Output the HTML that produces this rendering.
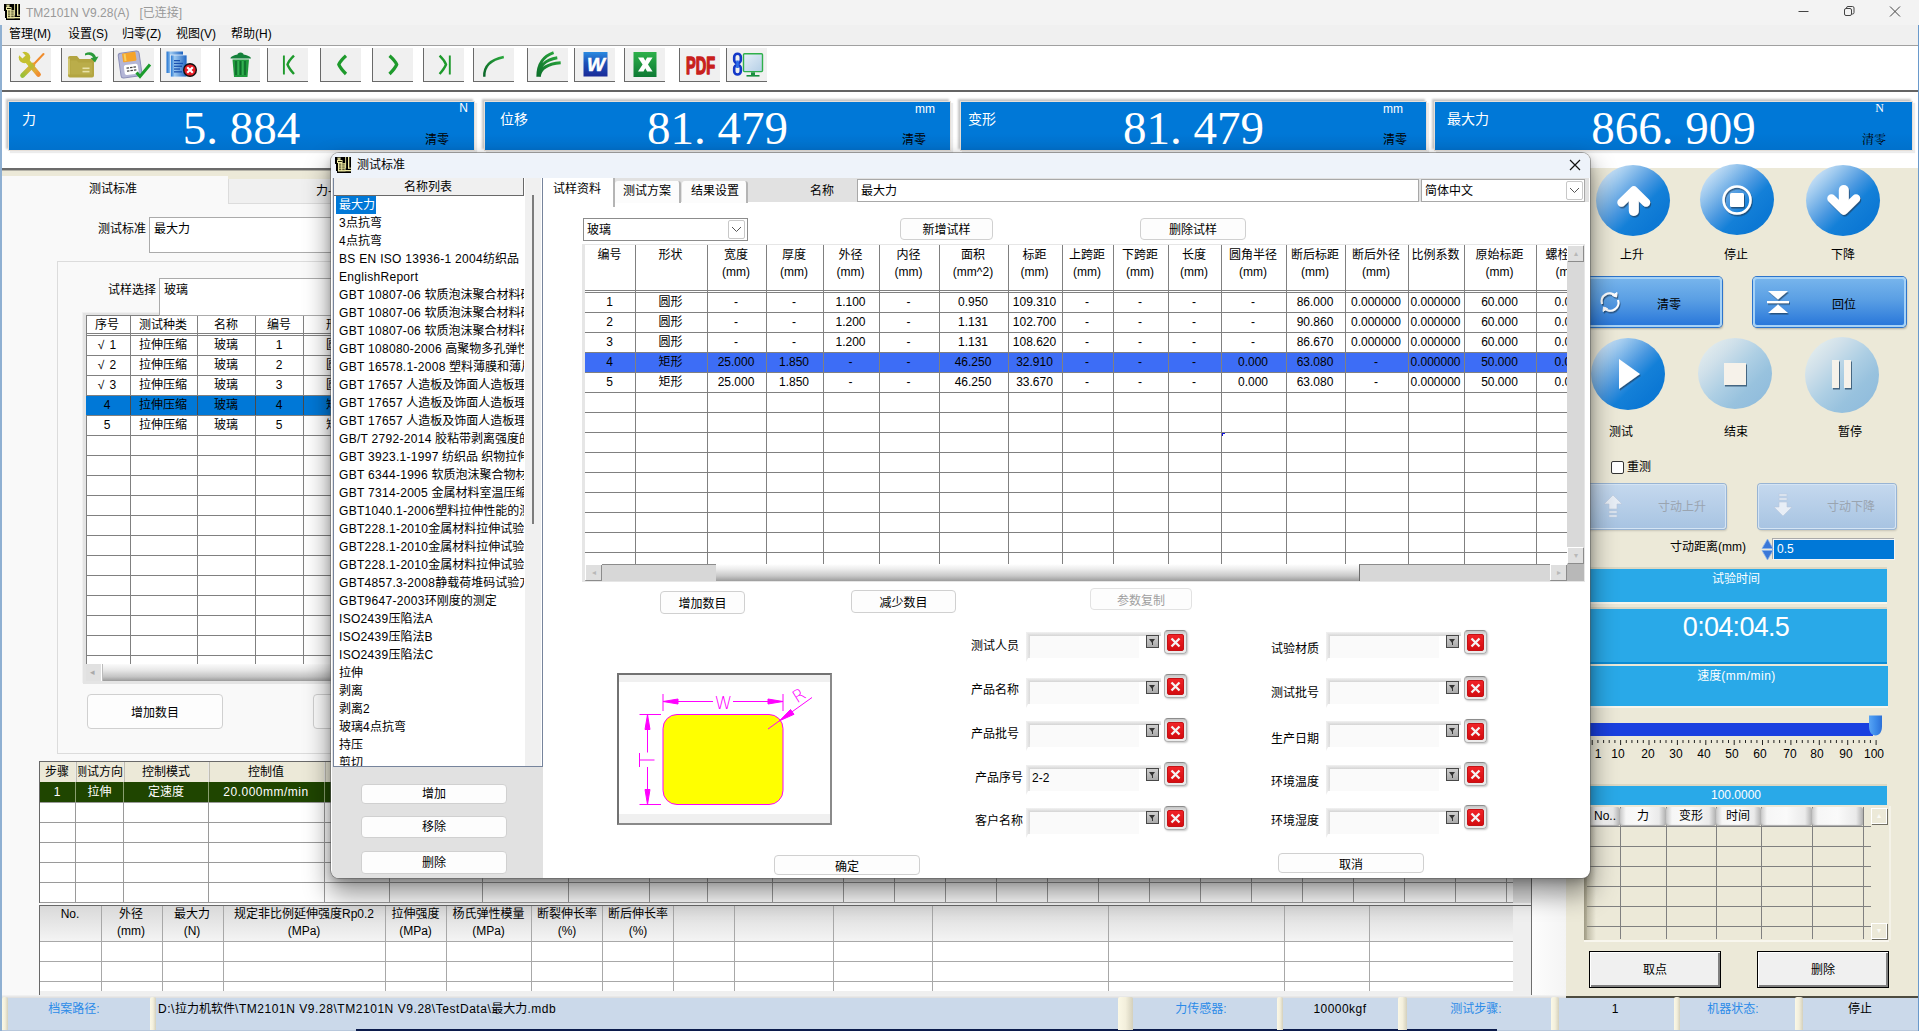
<!DOCTYPE html><html lang="zh-CN"><head><meta charset="utf-8"><title>TM2101N V9.28(A)</title><style>
*{box-sizing:border-box;margin:0;padding:0}
html,body{width:1919px;height:1031px;overflow:hidden;background:#fff}
body{position:relative;font:12px/16px "Liberation Sans","Noto Sans CJK SC",sans-serif;color:#000}
.a{position:absolute}
.c{text-align:center}
.t{position:absolute;white-space:nowrap;line-height:16px}
.tb{position:absolute;top:48px;width:41px;height:34px;background:#f0f0f0;border-left:1px solid #696969;border-bottom:1px solid #696969}
.tb svg{position:absolute;left:0;top:0}
.disp{position:absolute;top:102px;height:48px;background:linear-gradient(180deg,#0078d7 65%,#0071cc);box-shadow:0 0 0 1px #e6dfd8,-2px -2px 2px 1px #c6c6c6,2px 2px 1px 1px #ececec}
.disp .num{position:absolute;left:0;right:0;top:-2px;text-align:center;color:#fff;font:47px/56px "Liberation Serif","Noto Serif CJK SC",serif;white-space:nowrap}
.disp .num i{display:inline-block;width:.5em;font-style:normal;text-align:left}
.disp .lb{position:absolute;left:13px;top:8px;color:#fff;font-size:14px;line-height:18px}
.disp .un{position:absolute;top:-1px;color:#fff;font-size:12px}
.disp .cl{position:absolute;top:30px;color:#000;font-size:12px}
.btn{position:absolute;background:#fdfdfd;border:1px solid #d0d0d0;border-radius:4px;text-align:center;white-space:nowrap;padding-top:1.500px}
.g{position:absolute;overflow:hidden}
.g .h,.g .v{position:absolute;background:#808080}
.cell{position:absolute;text-align:center;white-space:nowrap;line-height:16px;overflow:hidden}
.li{position:absolute;left:339px;white-space:nowrap;height:18px;line-height:18px}
.inp{position:absolute;height:26px;background:#fafafa;border-top:4px solid #dadada;border-left:4px solid #e2e2e2}
.inp:before{content:"";position:absolute;left:-4px;top:-4px;right:-22px;height:4px;background:linear-gradient(180deg,#f2f2f2,#d4d4d4)}
.inp:after{content:"";position:absolute;left:-4px;top:-4px;width:4px;height:30px;background:linear-gradient(90deg,#f2f2f2,#d8d8d8);clip-path:polygon(0 0,100% 4px,100% 22px,0 100%)}
.dd{position:absolute;width:13px;height:13px;background:linear-gradient(180deg,#cfcfcf,#aaa);border:1px solid #484848}
.dd:after{content:"";position:absolute;left:2px;top:3px;border:3.500px solid transparent;border-top:4px solid #333;border-bottom:0}
.dd:before{content:"";position:absolute;left:5px;top:5px;width:1px;height:4px;background:#333}
.rx{position:absolute;width:23px;height:24px;border-radius:4px;background:linear-gradient(180deg,#c4c4c4,#e8e8e8 22%,#ececec);border:1px solid #b0b0b0;border-top-color:#8c8c8c;box-shadow:1px 1px 2px #c8c8c8}
.rx b{position:absolute;left:2px;top:3px;width:17px;height:17px;border-radius:2px;background:linear-gradient(180deg,#f02428,#d40c10);border:1px solid #c41216}
.circ{position:absolute;width:74px;height:74px;border-radius:50%}
.pb{position:absolute;background:#29a9e8;color:#fff;text-align:center}
.sep{position:absolute;top:997px;width:8px;height:33px;background:linear-gradient(90deg,#fbf8e6 0%,#f3efdc 50%,#d4d0bc 100%);border-radius:2px 2px 0 0}
</style></head><body>
<div class="a" style="left:0px;top:0px;width:1919px;height:25px;background:#f3f3f3"></div>
<svg class="a" style="left:4px;top:4px" width="16" height="16" viewBox="0 0 16 16"><path d="M0 0H16V16H2V14H1V7H0Z" fill="#000"/><g fill="#f1eda6"><rect x="2.500" y="0.500" width="3" height="2.300"/><rect x="2" y="3" width="5.500" height="3" /><rect x="3" y="6" width="7.500" height="8.300"/><rect x="10.200" y="0" width="0.900" height="11.500"/><rect x="13" y="0" width="1.300" height="11.500"/><rect x="13" y="10.700" width="3" height="1"/><rect x="3" y="13" width="13" height="1.300"/></g><g fill="#1a1800"><rect x="3.500" y="0.300" width="1" height="1"/><rect x="3" y="4" width="3.800" height="1"/><rect x="4" y="6.700" width="2.300" height=".8"/><rect x="7.200" y="6.700" width="2.500" height=".8"/><rect x="4" y="8.600" width="2.300" height=".8"/><rect x="7.200" y="8.600" width="2.500" height=".8"/><rect x="4" y="10.500" width="2.300" height=".8"/><rect x="7.200" y="10.500" width="2.500" height=".8"/><rect x="4" y="12.300" width="2.300" height=".8"/><rect x="7.200" y="12.300" width="2.500" height=".8"/></g></svg>
<div class="t " style="left:26px;top:5px;color:#999">TM2101N V9.28(A)&nbsp;&nbsp;&nbsp;[已连接]</div>
<svg class="a" style="left:1790px;top:0" width="129" height="25" viewBox="0 0 129 25" fill="none" stroke="#444" stroke-width="1"><path d="M8.5 11.5h10"/><rect x="54.5" y="8.5" width="7" height="7" rx="1.5"/><path d="M56.5 8.5v-0.5a1.5 1.5 0 0 1 1.5-1.5h4.5a1.5 1.5 0 0 1 1.5 1.5v4.500a1.5 1.5 0 0 1-1.5 1.5h-0.5"/><path d="M100 6.500l10 10M110 6.500l-10 10"/></svg>
<div class="a" style="left:0px;top:25px;width:1919px;height:20px;background:#f0f0f0"></div>
<div class="t " style="left:9px;top:26px;">管理(M)</div>
<div class="t " style="left:68px;top:26px;">设置(S)</div>
<div class="t " style="left:122px;top:26px;">归零(Z)</div>
<div class="t " style="left:176px;top:26px;">视图(V)</div>
<div class="t " style="left:231px;top:26px;">帮助(H)</div>
<div class="a" style="left:0px;top:45px;width:1919px;height:1px;background:#a0a0a0"></div>
<div class="a" style="left:0px;top:46px;width:1919px;height:45px;background:#fff"></div>
<div class="a" style="left:0px;top:90px;width:1919px;height:2px;background:#646464"></div>
<div class="tb" style="left:10px"><svg width="41" height="34" viewBox="0 0 41 34"><defs><linearGradient id="tg" x1="0" y1="0" x2="1" y2="1"><stop offset="0" stop-color="#d8c828"/><stop offset=".45" stop-color="#b4bc34"/><stop offset=".75" stop-color="#e8a838"/><stop offset="1" stop-color="#f08c30"/></linearGradient><linearGradient id="tg2" x1="1" y1="0" x2="0" y2="1"><stop offset="0" stop-color="#e8a030"/><stop offset=".5" stop-color="#c8b838"/><stop offset="1" stop-color="#98c038"/></linearGradient></defs>
<path d="M32.500 6L23.500 15.500" stroke="#f08c2c" stroke-width="2" stroke-linecap="round"/><path d="M22 17L11.500 27.500" stroke="url(#tg2)" stroke-width="4.600" stroke-linecap="round"/>
<path d="M15 11.500L27.500 26.500" stroke="url(#tg)" stroke-width="4.800" stroke-linecap="round"/><circle cx="13.500" cy="9.500" r="5.800" fill="#c4c030"/><rect x="-2.200" y="-9" width="4.400" height="9" transform="translate(13 9) rotate(-45)" fill="#f0f0f0"/></svg></div>
<div class="tb" style="left:61px"><svg width="41" height="34" viewBox="0 0 41 34"><path d="M6 10a2 2 0 0 1 2-2h7l2.500 3h12.500a2 2 0 0 1 2 2v14.500a2 2 0 0 1-2 2h-22a2 2 0 0 1-2-2z" fill="#b3a541"/><path d="M8.500 12.500h6l2 2h13.500v12h-21.500z" fill="#baad4a"/><path d="M7 10.500v16" stroke="#d9cf7d" stroke-width="1.500"/><rect x="20.500" y="19.500" width="7" height="1.600" fill="#e8e2a8"/><rect x="20.500" y="22.800" width="7" height="1.600" fill="#e8e2a8"/><path d="M23 5.500c4-2.500 9.500-1.500 11 3.500l2.500-0.500l-3.500 6l-4.500-4.500l2.500-0.300c-1.500-3-5-3.500-8-2.200z" fill="#2a9a3a"/></svg></div>
<div class="tb" style="left:113px"><svg width="41" height="34" viewBox="0 0 41 34"><g transform="rotate(-8 16 16)"><rect x="5.500" y="4" width="21" height="25" rx="2.500" fill="#b4b6d6" stroke="#8d90b8" stroke-width="1"/><rect x="9.500" y="4.500" width="13.500" height="9" rx="1" fill="#f5a32a"/><rect x="11" y="5.500" width="2" height="7" fill="#f7d060"/><rect x="9.500" y="16.500" width="14" height="10" rx="2" fill="#fff"/><g fill="#444"><rect x="12" y="19" width="2.500" height="1.300"/><rect x="15.500" y="19" width="2.500" height="1.300"/><rect x="19" y="19" width="2.500" height="1.300"/><rect x="12" y="22" width="2.500" height="1.300"/><rect x="15.500" y="22" width="2.500" height="1.300"/><rect x="19" y="22" width="2.500" height="1.300"/></g></g><path d="M22.500 24.500l3.500 4l10-12" stroke="#1c9c2c" stroke-width="3" fill="none"/></svg></div>
<div class="tb" style="left:160px"><svg width="41" height="34" viewBox="0 0 41 34"><defs><linearGradient id="dg" x1="0" y1="0" x2="1" y2="0"><stop offset="0" stop-color="#1a6fd0"/><stop offset=".25" stop-color="#9cc8f0"/><stop offset="1" stop-color="#1c62c0"/></linearGradient></defs><rect x="5.500" y="3.500" width="16.500" height="21.500" fill="url(#dg)"/><rect x="9.500" y="7" width="16.500" height="22" fill="url(#dg)" stroke="#e8f0fa" stroke-width=".8"/><g fill="#1a50b0"><rect x="13" y="12" width="6" height="1.300"/><rect x="13" y="14.800" width="9" height="1.300"/><rect x="13" y="17.600" width="8" height="1.300"/><rect x="13" y="20.400" width="6" height="1.300"/><rect x="13" y="23.200" width="8" height="1.300"/></g><circle cx="29" cy="22" r="6.300" fill="#e81c24" stroke="#111" stroke-width="1.400"/><path d="M26.200 19.200l5.600 5.600M31.800 19.200l-5.600 5.600" stroke="#fff" stroke-width="2.200"/></svg></div>
<div class="tb" style="left:219px"><svg width="41" height="34" viewBox="0 0 41 34"><path d="M10.500 10.500c0-2 4-3.500 7-4c0-1 1-2 3-2s3 1 3 2c3 0.500 7.500 2 7.500 4z" fill="#14803a"/><path d="M12.500 11.500h16.500l-1.500 17.500h-13.500z" fill="#1f9a3c"/><path d="M16 13v14M20.500 13v14M25 13v14" stroke="#0e6a2c" stroke-width="1.600"/><path d="M18.200 13v14M22.800 13v14" stroke="#3cb85a" stroke-width="1"/></svg></div>
<div class="tb" style="left:267px"><svg width="41" height="34" viewBox="0 0 41 34"><path d="M15.900 7.500v19" stroke="#1e9a2c" stroke-width="1.900" fill="none"/><path d="M26 7.700Q21 12.500 19.500 16.500Q21 20.500 26 26" stroke="#1e9a2c" stroke-width="2.400" fill="none"/></svg></div>
<div class="tb" style="left:320px"><svg width="41" height="34" viewBox="0 0 41 34"><path d="M25 7.700Q19.500 12.500 17.800 16.500Q19.500 20.500 25 26" stroke="#1e9a2c" stroke-width="3.200" fill="none"/></svg></div>
<div class="tb" style="left:372px"><svg width="41" height="34" viewBox="0 0 41 34"><path d="M16.500 7.700Q22 12.500 23.700 16.500Q22 20.500 16.500 26" stroke="#1e9a2c" stroke-width="3.200" fill="none"/></svg></div>
<div class="tb" style="left:423px"><svg width="41" height="34" viewBox="0 0 41 34"><path d="M15.600 7.700Q20.500 12.500 22 16.500Q20.500 20.500 15.600 26" stroke="#1e9a2c" stroke-width="2.400" fill="none"/><path d="M25.800 7.500v19" stroke="#1e9a2c" stroke-width="1.900" fill="none"/></svg></div>
<div class="tb" style="left:473px"><svg width="41" height="34" viewBox="0 0 41 34"><defs><linearGradient id="cg" x1="0" y1="1" x2="1" y2="0"><stop offset="0" stop-color="#0a6428"/><stop offset="1" stop-color="#2aa83c"/></linearGradient></defs><path d="M10.300 28.700c-0.500-10 6-17 19.500-19.700" stroke="url(#cg)" stroke-width="2.400" fill="none"/></svg></div>
<div class="tb" style="left:527px"><svg width="41" height="34" viewBox="0 0 41 34"><defs><linearGradient id="mg" x1="0" y1="1" x2="1" y2="0"><stop offset="0" stop-color="#0c6e2a"/><stop offset="1" stop-color="#2cac3e"/></linearGradient></defs><path d="M9.800 28.700c0-12 5.500-20.500 15.800-24M10.500 28.700c0-10 6.500-17 18.800-19M11.200 28.700c1-8 8-13 21.500-14" stroke="url(#mg)" stroke-width="2.900" fill="none"/></svg></div>
<div class="tb" style="left:574px"><svg width="41" height="34" viewBox="0 0 41 34"><defs><linearGradient id="wg" x1="0" y1="0" x2="0" y2="1"><stop offset="0" stop-color="#2a8ae0"/><stop offset=".45" stop-color="#1c50b8"/><stop offset="1" stop-color="#1a2a98"/></linearGradient></defs><rect x="8.500" y="4" width="24" height="24.500" fill="url(#wg)"/><text x="21" y="23" font-family="Liberation Sans,sans-serif" font-weight="bold" font-style="italic" font-size="19" fill="#fff" stroke="#fff" stroke-width=".5" text-anchor="middle">W</text></svg></div>
<div class="tb" style="left:624px"><svg width="41" height="34" viewBox="0 0 41 34"><defs><linearGradient id="xg" x1="0" y1="0" x2="0" y2="1"><stop offset="0" stop-color="#2db04a"/><stop offset="1" stop-color="#0e7a34"/></linearGradient></defs><rect x="8.500" y="4" width="23" height="25" fill="url(#xg)"/><path d="M13 9.500h5.500l1.800 3.300l1.800-3.300h5.500l-4.600 7l4.600 7h-5.500l-1.800-3.300l-1.800 3.300h-5.500l4.600-7z" fill="#fff"/></svg></div>
<div class="tb" style="left:679px"><svg width="41" height="34" viewBox="0 0 41 34"><text x="20.500" y="25.500" font-family="Liberation Sans,sans-serif" font-weight="bold" font-size="24" fill="#c8201c" stroke="#c8201c" stroke-width="1.500" stroke-linejoin="round" text-anchor="middle" textLength="29" lengthAdjust="spacingAndGlyphs">PDF</text></svg></div>
<div class="tb" style="left:726px"><svg width="41" height="34" viewBox="0 0 41 34"><defs><linearGradient id="sg" x1="0" y1="0" x2="1" y2="1"><stop offset="0" stop-color="#e6f0f8"/><stop offset="1" stop-color="#b4cee6"/></linearGradient></defs><rect x="16.500" y="5.800" width="19" height="17.800" rx="1" fill="url(#sg)" stroke="#2fb04a" stroke-width="1.400"/><rect x="24" y="24.300" width="4" height="3" fill="#1c9040"/><rect x="19.500" y="27" width="13" height="1.600" fill="#1c9040"/><g fill="none" stroke="#1438c8" stroke-width="2.600"><rect x="7.200" y="5.800" width="6.600" height="9.500" rx="3.300"/><rect x="7.200" y="17" width="6.600" height="9.500" rx="3.300"/><path d="M10.500 12.500v7.500" stroke="#2c6ce8"/></g></svg></div>
<div class="disp" style="left:9px;width:465px"><div class="lb" style="left:13px">力</div><div class="num">5<i>.</i>884</div><div class="un" style="right:6px;top:-2.500px;">N</div><div class="cl" style="right:25px;">清零</div></div>
<div class="disp" style="left:485px;width:465px"><div class="lb" style="left:15px">位移</div><div class="num">81<i>.</i>479</div><div class="un" style="right:15px;">mm</div><div class="cl" style="right:24px;">清零</div></div>
<div class="disp" style="left:961px;width:465px"><div class="lb" style="left:7px">变形</div><div class="num">81<i>.</i>479</div><div class="un" style="right:23px;">mm</div><div class="cl" style="right:19px;">清零</div></div>
<div class="disp" style="left:1435px;width:477px"><div class="lb" style="left:12px">最大力</div><div class="num">866<i>.</i>909</div><div class="un" style="right:28px;font-family:'Liberation Serif','Noto Serif CJK SC',serif;top:-2.500px;">N</div><div class="cl" style="right:26px;font-family:'Liberation Serif','Noto Serif CJK SC',serif;">清零</div></div>
<div class="a" style="left:0px;top:168px;width:1566px;height:2px;background:#6b6b6b"></div>
<div class="a" style="left:0px;top:170px;width:1566px;height:830px;background:#ece9d8;border-top:1px solid #b4b2a8"></div>
<div class="a" style="left:1566px;top:168px;width:1353px;height:830px;background:#ece9d8"></div>
<div class="a" style="left:2px;top:176px;width:226px;height:30px;background:#f9f9f9"></div>
<div class="a" style="left:2px;top:203px;width:1530px;height:794px;background:#f9f9f9;border-right:1px solid #707070"></div>
<div class="a" style="left:228px;top:179px;width:1303px;height:25px;background:#f0f0f0;border-bottom:1px solid #dcdcdc;border-left:1px solid #dcdcdc"></div>
<div class="a" style="left:1532px;top:179px;width:34px;height:818px;background:linear-gradient(90deg,#fdfdfd,#f4f4f4)"></div>
<div class="t c" style="left:-37px;width:300px;top:181px;">测试标准</div>
<div class="t " style="left:316px;top:183px;">力-</div>
<div class="t " style="left:98px;top:221px;">测试标准</div>
<div class="a" style="left:149px;top:217px;width:400px;height:36px;background:#fff;border:1px solid #ababab"></div>
<div class="t " style="left:154px;top:221px;">最大力</div>
<div class="a" style="left:57px;top:261px;width:1400px;height:493px;border:1px solid #dcdcdc"></div>
<div class="t " style="left:108px;top:282px;">试样选择</div>
<div class="a" style="left:83px;top:313px;width:470px;height:371px;background:#e4e4e4;box-shadow:-1px -1px 0 #f0f0f0"></div>
<div class="g" style="left:86px;top:315px;width:460px;height:349px;background:#fff;"><div class="h" style="left:0;top:0px;width:460px;height:1px;background:#808080"></div><div class="h" style="left:0;top:18px;width:460px;height:1px;background:#808080"></div><div class="h" style="left:0;top:20px;width:460px;height:1px;background:#808080"></div><div class="h" style="left:0;top:40px;width:460px;height:1px;background:#808080"></div><div class="h" style="left:0;top:60px;width:460px;height:1px;background:#808080"></div><div class="h" style="left:0;top:80px;width:460px;height:1px;background:#808080"></div><div class="h" style="left:0;top:100px;width:460px;height:1px;background:#808080"></div><div class="h" style="left:0;top:120px;width:460px;height:1px;background:#808080"></div><div class="h" style="left:0;top:140px;width:460px;height:1px;background:#808080"></div><div class="h" style="left:0;top:160px;width:460px;height:1px;background:#808080"></div><div class="h" style="left:0;top:180px;width:460px;height:1px;background:#808080"></div><div class="h" style="left:0;top:200px;width:460px;height:1px;background:#808080"></div><div class="h" style="left:0;top:220px;width:460px;height:1px;background:#808080"></div><div class="h" style="left:0;top:240px;width:460px;height:1px;background:#808080"></div><div class="h" style="left:0;top:260px;width:460px;height:1px;background:#808080"></div><div class="h" style="left:0;top:280px;width:460px;height:1px;background:#808080"></div><div class="h" style="left:0;top:300px;width:460px;height:1px;background:#808080"></div><div class="h" style="left:0;top:320px;width:460px;height:1px;background:#808080"></div><div class="h" style="left:0;top:340px;width:460px;height:1px;background:#808080"></div><div class="v" style="left:0px;top:0;width:1px;height:349px;background:#808080"></div><div class="v" style="left:44px;top:0;width:1px;height:349px;background:#808080"></div><div class="v" style="left:111px;top:0;width:1px;height:349px;background:#808080"></div><div class="v" style="left:169px;top:0;width:1px;height:349px;background:#808080"></div><div class="v" style="left:217px;top:0;width:1px;height:349px;background:#808080"></div>
<div class="a" style="left:0;top:81px;width:460px;height:19px;background:#0078d7"></div>
<div class="v" style="left:44px;top:81px;width:1px;height:19px;background:#4a4a4a"></div>
<div class="v" style="left:111px;top:81px;width:1px;height:19px;background:#4a4a4a"></div>
<div class="v" style="left:169px;top:81px;width:1px;height:19px;background:#4a4a4a"></div>
<div class="v" style="left:217px;top:81px;width:1px;height:19px;background:#4a4a4a"></div>
</div>
<div class="cell" style="left:7.0px;top:316.5px;width:200px;">序号</div>
<div class="cell" style="left:63.0px;top:316.5px;width:200px;">测试种类</div>
<div class="cell" style="left:126.0px;top:316.5px;width:200px;">名称</div>
<div class="cell" style="left:179.0px;top:316.5px;width:200px;">编号</div>
<div class="cell" style="left:238.0px;top:316.5px;width:200px;">形状</div>
<div class="cell" style="left:7.0px;top:337px;width:200px;word-spacing:2px">√ 1</div>
<div class="cell" style="left:318.0px;top:337px;width:40px;">圆形</div>
<div class="cell" style="left:63.0px;top:337px;width:200px;">拉伸压缩</div>
<div class="cell" style="left:126.0px;top:337px;width:200px;">玻璃</div>
<div class="cell" style="left:179.0px;top:337px;width:200px;">1</div>
<div class="cell" style="left:7.0px;top:357px;width:200px;word-spacing:2px">√ 2</div>
<div class="cell" style="left:318.0px;top:357px;width:40px;">圆形</div>
<div class="cell" style="left:63.0px;top:357px;width:200px;">拉伸压缩</div>
<div class="cell" style="left:126.0px;top:357px;width:200px;">玻璃</div>
<div class="cell" style="left:179.0px;top:357px;width:200px;">2</div>
<div class="cell" style="left:7.0px;top:377px;width:200px;word-spacing:2px">√ 3</div>
<div class="cell" style="left:318.0px;top:377px;width:40px;">圆形</div>
<div class="cell" style="left:63.0px;top:377px;width:200px;">拉伸压缩</div>
<div class="cell" style="left:126.0px;top:377px;width:200px;">玻璃</div>
<div class="cell" style="left:179.0px;top:377px;width:200px;">3</div>
<div class="cell" style="left:7.0px;top:397px;width:200px;word-spacing:2px">4</div>
<div class="cell" style="left:318.0px;top:397px;width:40px;">矩形</div>
<div class="cell" style="left:63.0px;top:397px;width:200px;">拉伸压缩</div>
<div class="cell" style="left:126.0px;top:397px;width:200px;">玻璃</div>
<div class="cell" style="left:179.0px;top:397px;width:200px;">4</div>
<div class="cell" style="left:7.0px;top:417px;width:200px;word-spacing:2px">5</div>
<div class="cell" style="left:318.0px;top:417px;width:40px;">矩形</div>
<div class="cell" style="left:63.0px;top:417px;width:200px;">拉伸压缩</div>
<div class="cell" style="left:126.0px;top:417px;width:200px;">玻璃</div>
<div class="cell" style="left:179.0px;top:417px;width:200px;">5</div>
<div class="a" style="left:159px;top:278px;width:400px;height:38px;background:#fff;border:1px solid #ababab"></div>
<div class="t " style="left:164px;top:282px;">玻璃</div>
<div class="a" style="left:86px;top:664px;width:460px;height:17px;background:linear-gradient(180deg,#fbfbfb 0%,#e8e8e8 35%,#c4c4c4 75%,#9a9a9a 100%)"></div>
<div class="a" style="left:86px;top:664px;width:16px;height:17px;background:#e1e1e1;border-right:1px solid #fff;box-shadow:1px 0 0 #bbb"></div>
<div class="t " style="left:90px;top:664px;color:#aaa;font-size:9px">◂</div>
<div class="btn" style="left:87px;top:694px;width:136px;height:35px;line-height:33px">增加数目</div>
<div class="btn" style="left:313px;top:694px;width:136px;height:35px;line-height:33px">减少数目</div>
<div class="a" style="left:39px;top:761px;width:1493px;height:142px;background:#e2e2e2"></div>
<div class="g" style="left:40px;top:762px;width:1473px;height:141px;background:#fff;"><div class="h" style="left:0;top:20px;width:1473px;height:1px;background:#9a9a9a"></div><div class="h" style="left:0;top:40px;width:1473px;height:1px;background:#9a9a9a"></div><div class="h" style="left:0;top:60px;width:1473px;height:1px;background:#9a9a9a"></div><div class="h" style="left:0;top:80px;width:1473px;height:1px;background:#9a9a9a"></div><div class="h" style="left:0;top:100px;width:1473px;height:1px;background:#9a9a9a"></div><div class="h" style="left:0;top:120px;width:1473px;height:1px;background:#9a9a9a"></div><div class="h" style="left:0;top:140px;width:1473px;height:1px;background:#9a9a9a"></div><div class="v" style="left:35px;top:0;width:1px;height:141px;background:#9a9a9a"></div><div class="v" style="left:83px;top:0;width:1px;height:141px;background:#9a9a9a"></div><div class="v" style="left:168px;top:0;width:1px;height:141px;background:#9a9a9a"></div><div class="v" style="left:284px;top:0;width:1px;height:141px;background:#9a9a9a"></div><div class="v" style="left:349px;top:0;width:1px;height:141px;background:#9a9a9a"></div><div class="v" style="left:442px;top:0;width:1px;height:141px;background:#9a9a9a"></div><div class="v" style="left:528px;top:0;width:1px;height:141px;background:#9a9a9a"></div><div class="v" style="left:609px;top:0;width:1px;height:141px;background:#9a9a9a"></div><div class="v" style="left:667px;top:0;width:1px;height:141px;background:#9a9a9a"></div><div class="v" style="left:732px;top:0;width:1px;height:141px;background:#9a9a9a"></div><div class="v" style="left:803px;top:0;width:1px;height:141px;background:#9a9a9a"></div><div class="v" style="left:854px;top:0;width:1px;height:141px;background:#9a9a9a"></div><div class="v" style="left:905px;top:0;width:1px;height:141px;background:#9a9a9a"></div><div class="v" style="left:956px;top:0;width:1px;height:141px;background:#9a9a9a"></div><div class="v" style="left:1007px;top:0;width:1px;height:141px;background:#9a9a9a"></div><div class="v" style="left:1058px;top:0;width:1px;height:141px;background:#9a9a9a"></div><div class="v" style="left:1109px;top:0;width:1px;height:141px;background:#9a9a9a"></div><div class="v" style="left:1160px;top:0;width:1px;height:141px;background:#9a9a9a"></div><div class="v" style="left:1211px;top:0;width:1px;height:141px;background:#9a9a9a"></div><div class="v" style="left:1262px;top:0;width:1px;height:141px;background:#9a9a9a"></div><div class="v" style="left:1313px;top:0;width:1px;height:141px;background:#9a9a9a"></div><div class="v" style="left:1364px;top:0;width:1px;height:141px;background:#9a9a9a"></div><div class="v" style="left:1415px;top:0;width:1px;height:141px;background:#9a9a9a"></div><div class="v" style="left:1466px;top:0;width:1px;height:141px;background:#9a9a9a"></div>
<div class="a" style="left:0;top:0;width:1473px;height:20px;background:#ece9d8"></div>
<div class="a" style="left:35px;top:0;width:2px;height:20px;background:linear-gradient(90deg,#fff,#aca899)"></div>
<div class="a" style="left:83px;top:0;width:2px;height:20px;background:linear-gradient(90deg,#fff,#aca899)"></div>
<div class="a" style="left:168px;top:0;width:2px;height:20px;background:linear-gradient(90deg,#fff,#aca899)"></div>
<div class="a" style="left:284px;top:0;width:2px;height:20px;background:linear-gradient(90deg,#fff,#aca899)"></div>
<div class="a" style="left:349px;top:0;width:2px;height:20px;background:linear-gradient(90deg,#fff,#aca899)"></div>
<div class="a" style="left:442px;top:0;width:2px;height:20px;background:linear-gradient(90deg,#fff,#aca899)"></div>
<div class="a" style="left:528px;top:0;width:2px;height:20px;background:linear-gradient(90deg,#fff,#aca899)"></div>
<div class="a" style="left:609px;top:0;width:2px;height:20px;background:linear-gradient(90deg,#fff,#aca899)"></div>
<div class="a" style="left:667px;top:0;width:2px;height:20px;background:linear-gradient(90deg,#fff,#aca899)"></div>
<div class="a" style="left:732px;top:0;width:2px;height:20px;background:linear-gradient(90deg,#fff,#aca899)"></div>
<div class="a" style="left:803px;top:0;width:2px;height:20px;background:linear-gradient(90deg,#fff,#aca899)"></div>
<div class="a" style="left:854px;top:0;width:2px;height:20px;background:linear-gradient(90deg,#fff,#aca899)"></div>
<div class="a" style="left:905px;top:0;width:2px;height:20px;background:linear-gradient(90deg,#fff,#aca899)"></div>
<div class="a" style="left:956px;top:0;width:2px;height:20px;background:linear-gradient(90deg,#fff,#aca899)"></div>
<div class="a" style="left:1007px;top:0;width:2px;height:20px;background:linear-gradient(90deg,#fff,#aca899)"></div>
<div class="a" style="left:1058px;top:0;width:2px;height:20px;background:linear-gradient(90deg,#fff,#aca899)"></div>
<div class="a" style="left:1109px;top:0;width:2px;height:20px;background:linear-gradient(90deg,#fff,#aca899)"></div>
<div class="a" style="left:1160px;top:0;width:2px;height:20px;background:linear-gradient(90deg,#fff,#aca899)"></div>
<div class="a" style="left:1211px;top:0;width:2px;height:20px;background:linear-gradient(90deg,#fff,#aca899)"></div>
<div class="a" style="left:1262px;top:0;width:2px;height:20px;background:linear-gradient(90deg,#fff,#aca899)"></div>
<div class="a" style="left:1313px;top:0;width:2px;height:20px;background:linear-gradient(90deg,#fff,#aca899)"></div>
<div class="a" style="left:1364px;top:0;width:2px;height:20px;background:linear-gradient(90deg,#fff,#aca899)"></div>
<div class="a" style="left:1415px;top:0;width:2px;height:20px;background:linear-gradient(90deg,#fff,#aca899)"></div>
<div class="a" style="left:1466px;top:0;width:2px;height:20px;background:linear-gradient(90deg,#fff,#aca899)"></div>
<div class="a" style="left:0;top:20px;width:1473px;height:20px;background:#1f4500"></div>
<div class="a" style="left:35px;top:20px;width:1px;height:20px;background:#8aa070"></div>
<div class="a" style="left:83px;top:20px;width:1px;height:20px;background:#8aa070"></div>
<div class="a" style="left:168px;top:20px;width:1px;height:20px;background:#8aa070"></div>
<div class="a" style="left:284px;top:20px;width:1px;height:20px;background:#8aa070"></div>
<div class="a" style="left:349px;top:20px;width:1px;height:20px;background:#8aa070"></div>
<div class="a" style="left:442px;top:20px;width:1px;height:20px;background:#8aa070"></div>
<div class="a" style="left:528px;top:20px;width:1px;height:20px;background:#8aa070"></div>
<div class="a" style="left:609px;top:20px;width:1px;height:20px;background:#8aa070"></div>
<div class="a" style="left:667px;top:20px;width:1px;height:20px;background:#8aa070"></div>
<div class="a" style="left:732px;top:20px;width:1px;height:20px;background:#8aa070"></div>
<div class="a" style="left:803px;top:20px;width:1px;height:20px;background:#8aa070"></div>
<div class="a" style="left:854px;top:20px;width:1px;height:20px;background:#8aa070"></div>
<div class="a" style="left:905px;top:20px;width:1px;height:20px;background:#8aa070"></div>
<div class="a" style="left:956px;top:20px;width:1px;height:20px;background:#8aa070"></div>
<div class="a" style="left:1007px;top:20px;width:1px;height:20px;background:#8aa070"></div>
<div class="a" style="left:1058px;top:20px;width:1px;height:20px;background:#8aa070"></div>
<div class="a" style="left:1109px;top:20px;width:1px;height:20px;background:#8aa070"></div>
<div class="a" style="left:1160px;top:20px;width:1px;height:20px;background:#8aa070"></div>
<div class="a" style="left:1211px;top:20px;width:1px;height:20px;background:#8aa070"></div>
<div class="a" style="left:1262px;top:20px;width:1px;height:20px;background:#8aa070"></div>
<div class="a" style="left:1313px;top:20px;width:1px;height:20px;background:#8aa070"></div>
<div class="a" style="left:1364px;top:20px;width:1px;height:20px;background:#8aa070"></div>
<div class="a" style="left:1415px;top:20px;width:1px;height:20px;background:#8aa070"></div>
<div class="a" style="left:1466px;top:20px;width:1px;height:20px;background:#8aa070"></div>
</div>
<div class="a" style="left:39px;top:761px;width:1px;height:142px;background:#696969"></div>
<div class="a" style="left:39px;top:761px;width:1493px;height:1px;background:#696969"></div>
<div class="cell" style="left:-43.0px;top:764px;width:200px;">步骤</div>
<div class="cell" style="left:66.0px;top:764px;width:200px;">控制模式</div>
<div class="cell" style="left:166.0px;top:764px;width:200px;">控制值</div>
<div class="a" style="left:77.500px;top:764px;width:45.500px;height:16px;overflow:hidden"><span style="position:absolute;right:0;white-space:nowrap;line-height:16px">测试方向</span></div>
<div class="cell" style="left:-43.0px;top:784px;width:200px;color:#fff">1</div>
<div class="cell" style="left:-0.5px;top:784px;width:200px;color:#fff">拉伸</div>
<div class="cell" style="left:66.0px;top:784px;width:200px;color:#fff">定速度</div>
<div class="cell" style="left:166.0px;top:784px;width:200px;color:#fff;letter-spacing:.5px">20.000mm/min</div>
<div class="a" style="left:39px;top:905px;width:1493px;height:92px;background:#efefef"></div>
<div class="g" style="left:40px;top:906px;width:1473px;height:85px;background:#fff;"><div class="h" style="left:0;top:35px;width:1473px;height:1px;background:#a8a8a8"></div><div class="h" style="left:0;top:55px;width:1473px;height:1px;background:#a8a8a8"></div><div class="h" style="left:0;top:75px;width:1473px;height:1px;background:#a8a8a8"></div><div class="v" style="left:61px;top:0;width:1px;height:85px;background:#a8a8a8"></div><div class="v" style="left:122px;top:0;width:1px;height:85px;background:#a8a8a8"></div><div class="v" style="left:183px;top:0;width:1px;height:85px;background:#a8a8a8"></div><div class="v" style="left:345px;top:0;width:1px;height:85px;background:#a8a8a8"></div><div class="v" style="left:406px;top:0;width:1px;height:85px;background:#a8a8a8"></div><div class="v" style="left:491px;top:0;width:1px;height:85px;background:#a8a8a8"></div><div class="v" style="left:562px;top:0;width:1px;height:85px;background:#a8a8a8"></div><div class="v" style="left:633px;top:0;width:1px;height:85px;background:#a8a8a8"></div><div class="v" style="left:694px;top:0;width:1px;height:85px;background:#a8a8a8"></div><div class="v" style="left:793px;top:0;width:1px;height:85px;background:#a8a8a8"></div><div class="v" style="left:892px;top:0;width:1px;height:85px;background:#a8a8a8"></div><div class="v" style="left:1068px;top:0;width:1px;height:85px;background:#a8a8a8"></div><div class="v" style="left:1244px;top:0;width:1px;height:85px;background:#a8a8a8"></div><div class="v" style="left:1329px;top:0;width:1px;height:85px;background:#a8a8a8"></div>
<div class="a" style="left:0;top:0;width:1473px;height:35px;background:linear-gradient(180deg,#d9d9d9,#f4f4f4)"></div>
<div class="a" style="left:61px;top:0;width:1px;height:35px;background:#a8a8a8"></div>
<div class="a" style="left:122px;top:0;width:1px;height:35px;background:#a8a8a8"></div>
<div class="a" style="left:183px;top:0;width:1px;height:35px;background:#a8a8a8"></div>
<div class="a" style="left:345px;top:0;width:1px;height:35px;background:#a8a8a8"></div>
<div class="a" style="left:406px;top:0;width:1px;height:35px;background:#a8a8a8"></div>
<div class="a" style="left:491px;top:0;width:1px;height:35px;background:#a8a8a8"></div>
<div class="a" style="left:562px;top:0;width:1px;height:35px;background:#a8a8a8"></div>
<div class="a" style="left:633px;top:0;width:1px;height:35px;background:#a8a8a8"></div>
<div class="a" style="left:694px;top:0;width:1px;height:35px;background:#a8a8a8"></div>
<div class="a" style="left:793px;top:0;width:1px;height:35px;background:#a8a8a8"></div>
<div class="a" style="left:892px;top:0;width:1px;height:35px;background:#a8a8a8"></div>
<div class="a" style="left:1068px;top:0;width:1px;height:35px;background:#a8a8a8"></div>
<div class="a" style="left:1244px;top:0;width:1px;height:35px;background:#a8a8a8"></div>
<div class="a" style="left:1329px;top:0;width:1px;height:35px;background:#a8a8a8"></div>
</div>
<div class="a" style="left:39px;top:905px;width:1px;height:92px;background:#696969"></div>
<div class="a" style="left:39px;top:905px;width:1493px;height:1px;background:#696969"></div>
<div class="cell" style="left:-30.0px;top:906px;width:200px;">No.</div>
<div class="cell" style="left:31.0px;top:906px;width:200px;">外径</div>
<div class="cell" style="left:31.0px;top:923px;width:200px;">(mm)</div>
<div class="cell" style="left:92.0px;top:906px;width:200px;">最大力</div>
<div class="cell" style="left:92.0px;top:923px;width:200px;">(N)</div>
<div class="cell" style="left:204.0px;top:906px;width:200px;">规定非比例延伸强度Rp0.2</div>
<div class="cell" style="left:204.0px;top:923px;width:200px;">(MPa)</div>
<div class="cell" style="left:315.5px;top:906px;width:200px;">拉伸强度</div>
<div class="cell" style="left:315.5px;top:923px;width:200px;">(MPa)</div>
<div class="cell" style="left:388.5px;top:906px;width:200px;">杨氏弹性模量</div>
<div class="cell" style="left:388.5px;top:923px;width:200px;">(MPa)</div>
<div class="cell" style="left:467.0px;top:906px;width:200px;">断裂伸长率</div>
<div class="cell" style="left:467.0px;top:923px;width:200px;">(%)</div>
<div class="cell" style="left:538.0px;top:906px;width:200px;">断后伸长率</div>
<div class="cell" style="left:538.0px;top:923px;width:200px;">(%)</div>
<div class="a" style="left:1531px;top:203px;width:1px;height:794px;background:#6e6e6e"></div>
<svg width="0" height="0" style="position:absolute"><defs><filter id="sh" x="-20%" y="-20%" width="150%" height="150%"><feDropShadow dx="1" dy="1.500" stdDeviation=".6" flood-color="#1a3a5a" flood-opacity=".7"/></filter></defs></svg>
<div class="circ" style="left:1596px;top:164.5px;height:71px;background:linear-gradient(135deg,#d8e9f8 8%,#9cc8ee 25%,#4a98e0 47%,#1480d8 62%,#0c78d4 80%)"><svg style="position:absolute;left:0;top:-1.5px" width="74" height="74" viewBox="0 0 74 74"><g fill="none" stroke="#fff" stroke-linecap="round" stroke-linejoin="round" filter="url(#sh)"><path d="M25.500 39.500L37.800 27.500L50 39.500" stroke-width="8.500"/><path d="M37.800 30V48" stroke-width="10"/></g></svg></div>
<div class="circ" style="left:1700px;top:164.0px;height:71px;background:linear-gradient(135deg,#d8e9f8 8%,#9cc8ee 25%,#4a98e0 47%,#1480d8 62%,#0c78d4 80%)"><svg style="position:absolute;left:0;top:-1.5px" width="74" height="74" viewBox="0 0 74 74"><g filter="url(#sh)"><circle cx="37" cy="37" r="13.500" fill="none" stroke="#fff" stroke-width="2.500"/><rect x="30" y="30" width="14" height="14" rx="1.500" fill="#fff"/></g></svg></div>
<div class="circ" style="left:1806px;top:164.5px;height:71px;background:linear-gradient(135deg,#d8e9f8 8%,#9cc8ee 25%,#4a98e0 47%,#1480d8 62%,#0c78d4 80%)"><svg style="position:absolute;left:0;top:-1.5px" width="74" height="74" viewBox="0 0 74 74"><g fill="none" stroke="#fff" stroke-linecap="round" stroke-linejoin="round" filter="url(#sh)"><path d="M25.500 35.500L37.800 47.500L50 35.500" stroke-width="8.500"/><path d="M37.800 45V27" stroke-width="10"/></g></svg></div>
<div class="t c" style="left:1482px;width:300px;top:247px;">上升</div>
<div class="t c" style="left:1586px;width:300px;top:247px;">停止</div>
<div class="t c" style="left:1693px;width:300px;top:247px;">下降</div>
<div class="a" style="left:1568px;top:277px;width:154px;height:50px;background:linear-gradient(180deg,#76b4ec 0%,#5a9fe4 45%,#2a78da 100%);border:2px solid #a6d2f6;border-radius:4px;box-shadow:0 0 0 1px #2c74cc,1px 2px 2px rgba(0,0,0,.25)"></div>
<div class="a" style="left:1753px;top:277px;width:153px;height:50px;background:linear-gradient(180deg,#76b4ec 0%,#5a9fe4 45%,#2a78da 100%);border:2px solid #a6d2f6;border-radius:4px;box-shadow:0 0 0 1px #2c74cc,1px 2px 2px rgba(0,0,0,.25)"></div>
<svg class="a" style="left:1597px;top:289px" width="26" height="26" viewBox="0 0 26 26" fill="none" stroke="#fff" stroke-width="2.200" filter="url(#sh)"><path d="M5 15a8 8 0 0 1 13.500-8"/><path d="M21 11a8 8 0 0 1-13.500 8"/><path d="M15.500 6.500l4 1.500l0.500-4.500z" fill="#fff" stroke-width="1"/><path d="M10.500 19.500l-4-1.500l-0.500 4.500z" fill="#fff" stroke-width="1"/></svg>
<svg class="a" style="left:1766px;top:290px" width="24" height="24" viewBox="0 0 24 24" fill="#fff" filter="url(#sh)"><path d="M2 1h20l-10 8.500z"/><rect x="1" y="11" width="22" height="2.200"/><path d="M2 23h20l-10-8.500z"/></svg>
<div class="t c" style="left:1519px;width:300px;top:297px;">清零</div>
<div class="t c" style="left:1694px;width:300px;top:297px;">回位</div>
<div class="circ" style="left:1590.5px;top:337.5px;height:72px;background:linear-gradient(135deg,#d8e9f8 8%,#9cc8ee 25%,#4a98e0 47%,#1480d8 62%,#0c78d4 80%)"><svg style="position:absolute;left:0;top:-1.0px" width="74" height="74" viewBox="0 0 74 74"><path d="M28 22l21 15l-21 15z" fill="#fff" filter="url(#sh)"/></svg></div>
<div class="circ" style="left:1697.5px;top:338.0px;height:71px;background:linear-gradient(135deg,#e6eeee 8%,#cfe0ea 28%,#aecfe4 50%,#98c2de 70%,#90bcdc 90%)"><svg style="position:absolute;left:0;top:-1.5px" width="74" height="74" viewBox="0 0 74 74"><rect x="26" y="26" width="22" height="22" fill="#f6f2ea" filter="url(#sh)"/></svg></div>
<div class="circ" style="left:1805px;top:336.5px;height:76px;background:linear-gradient(135deg,#e6eeee 8%,#cfe0ea 28%,#aecfe4 50%,#98c2de 70%,#90bcdc 90%)"><svg style="position:absolute;left:0;top:1.0px" width="74" height="74" viewBox="0 0 74 74"><g fill="#f6f2ea" filter="url(#sh)"><rect x="27" y="22" width="7" height="28"/><rect x="39" y="22" width="7" height="28"/></g></svg></div>
<div class="t c" style="left:1471px;width:300px;top:424px;">测试</div>
<div class="t c" style="left:1586px;width:300px;top:424px;">结束</div>
<div class="t c" style="left:1700px;width:300px;top:424px;">暂停</div>
<div class="a" style="left:1611px;top:461px;width:13px;height:13px;background:#fff;border:1px solid #333;border-radius:2px"></div>
<div class="t " style="left:1627px;top:459px;">重测</div>
<div class="a" style="left:1572px;top:484px;width:154px;height:45px;background:linear-gradient(180deg,#c4d8ee,#a8c4e2);border:1px solid #d4e4f4;border-radius:3px;box-shadow:0 0 0 1px #98b4d4,1px 2px 2px rgba(0,0,0,.15)"></div>
<div class="a" style="left:1758px;top:484px;width:138px;height:45px;background:linear-gradient(180deg,#c4d8ee,#a8c4e2);border:1px solid #d4e4f4;border-radius:3px;box-shadow:0 0 0 1px #98b4d4,1px 2px 2px rgba(0,0,0,.15)"></div>
<svg class="a" style="left:1602px;top:494px" width="22" height="24" viewBox="0 0 22 24" fill="#e8eef6" stroke="#b8c8dc" stroke-width=".6"><path d="M11 1l9 9h-5v5h-8v-5h-5z"/><rect x="7" y="17" width="8" height="2"/><rect x="7" y="21" width="8" height="2"/></svg>
<svg class="a" style="left:1772px;top:493px" width="22" height="24" viewBox="0 0 22 24" fill="#e8eef6" stroke="#b8c8dc" stroke-width=".6"><path d="M11 23l9-9h-5v-5h-8v5h-5z"/><rect x="7" y="5" width="8" height="2"/><rect x="7" y="1" width="8" height="2"/></svg>
<div class="t c" style="left:1532px;width:300px;top:499px;color:#9aa4b0">寸动上升</div>
<div class="t c" style="left:1701px;width:300px;top:499px;color:#9aa4b0">寸动下降</div>
<div class="t" style="left:1546px;width:200px;text-align:right;top:539px">寸动距离(mm)</div>
<div class="a" style="left:1773px;top:539px;width:122px;height:21px;background:#0078d7;border:1px solid #f4f4f4;box-shadow:-1px -1px 0 #aaa"></div>
<div class="t " style="left:1777px;top:541px;color:#fff">0.5</div>
<svg class="a" style="left:1761px;top:538px" width="13" height="23" viewBox="0 0 13 23" fill="#3a78d8" stroke="#8ab4ee" stroke-width=".8"><path d="M6.500 1l5.500 9.500h-11z"/><path d="M6.500 22l5.500-9.500h-11z"/></svg>
<div class="pb" style="left:1585px;top:569px;width:302px;height:33px;line-height:20px;box-shadow:0 -2px 0 #dcd8c4,0 2px 0 #f8f6ec">试验时间</div>
<div class="pb" style="left:1585px;top:609px;width:302px;height:55px;font-size:27px;letter-spacing:-.7px;line-height:36px;border-bottom:2px solid #0c8cd4;box-shadow:0 -2px 0 #dcd8c4">0:04:04.5</div>
<div class="pb" style="left:1585px;top:666px;width:303px;height:40px;line-height:21px;box-shadow:0 2px 0 #f8f6ec">速度<span style="letter-spacing:.5px">(mm/min)</span></div>
<div class="a" style="left:1585px;top:723px;width:288px;height:12.5px;background:#1a40e0"></div>
<svg class="a" style="left:1868px;top:715px" width="15" height="21" viewBox="0 0 15 21"><defs><linearGradient id="th" x1="0" y1="0" x2="1" y2="0"><stop offset="0" stop-color="#58a4f4"/><stop offset=".5" stop-color="#3d8cea"/><stop offset="1" stop-color="#2c70d8"/></linearGradient></defs><path d="M1 .5h13v11c0 5-2.500 9-6.500 9s-6.500-4-6.500-9z" fill="url(#th)"/></svg>
<svg class="a" style="left:1585px;top:740px" width="320" height="6"><rect x="6.7" y="0" width="1" height="5" fill="#222"/><rect x="12.4" y="0" width="1" height="3" fill="#222"/><rect x="18.1" y="0" width="1" height="3" fill="#222"/><rect x="23.7" y="0" width="1" height="3" fill="#222"/><rect x="29.4" y="0" width="1" height="3" fill="#222"/><rect x="35.1" y="0" width="1" height="5" fill="#222"/><rect x="40.8" y="0" width="1" height="3" fill="#222"/><rect x="46.4" y="0" width="1" height="3" fill="#222"/><rect x="52.1" y="0" width="1" height="3" fill="#222"/><rect x="57.8" y="0" width="1" height="3" fill="#222"/><rect x="63.5" y="0" width="1" height="5" fill="#222"/><rect x="69.2" y="0" width="1" height="3" fill="#222"/><rect x="74.8" y="0" width="1" height="3" fill="#222"/><rect x="80.5" y="0" width="1" height="3" fill="#222"/><rect x="86.2" y="0" width="1" height="3" fill="#222"/><rect x="91.9" y="0" width="1" height="5" fill="#222"/><rect x="97.5" y="0" width="1" height="3" fill="#222"/><rect x="103.2" y="0" width="1" height="3" fill="#222"/><rect x="108.9" y="0" width="1" height="3" fill="#222"/><rect x="114.6" y="0" width="1" height="3" fill="#222"/><rect x="120.3" y="0" width="1" height="5" fill="#222"/><rect x="125.9" y="0" width="1" height="3" fill="#222"/><rect x="131.6" y="0" width="1" height="3" fill="#222"/><rect x="137.3" y="0" width="1" height="3" fill="#222"/><rect x="143.0" y="0" width="1" height="3" fill="#222"/><rect x="148.7" y="0" width="1" height="5" fill="#222"/><rect x="154.3" y="0" width="1" height="3" fill="#222"/><rect x="160.0" y="0" width="1" height="3" fill="#222"/><rect x="165.7" y="0" width="1" height="3" fill="#222"/><rect x="171.4" y="0" width="1" height="3" fill="#222"/><rect x="177.0" y="0" width="1" height="5" fill="#222"/><rect x="182.7" y="0" width="1" height="3" fill="#222"/><rect x="188.4" y="0" width="1" height="3" fill="#222"/><rect x="194.1" y="0" width="1" height="3" fill="#222"/><rect x="199.8" y="0" width="1" height="3" fill="#222"/><rect x="205.4" y="0" width="1" height="5" fill="#222"/><rect x="211.1" y="0" width="1" height="3" fill="#222"/><rect x="216.8" y="0" width="1" height="3" fill="#222"/><rect x="222.5" y="0" width="1" height="3" fill="#222"/><rect x="228.1" y="0" width="1" height="3" fill="#222"/><rect x="233.8" y="0" width="1" height="5" fill="#222"/><rect x="239.5" y="0" width="1" height="3" fill="#222"/><rect x="245.2" y="0" width="1" height="3" fill="#222"/><rect x="250.9" y="0" width="1" height="3" fill="#222"/><rect x="256.5" y="0" width="1" height="3" fill="#222"/><rect x="262.2" y="0" width="1" height="5" fill="#222"/><rect x="267.9" y="0" width="1" height="3" fill="#222"/><rect x="273.6" y="0" width="1" height="3" fill="#222"/><rect x="279.2" y="0" width="1" height="3" fill="#222"/><rect x="284.9" y="0" width="1" height="3" fill="#222"/><rect x="290.6" y="0" width="1" height="5" fill="#222"/></svg>
<div class="t c" style="left:1448px;width:300px;top:746px;">1</div>
<div class="t c" style="left:1468px;width:300px;top:746px;">10</div>
<div class="t c" style="left:1498px;width:300px;top:746px;">20</div>
<div class="t c" style="left:1526px;width:300px;top:746px;">30</div>
<div class="t c" style="left:1554px;width:300px;top:746px;">40</div>
<div class="t c" style="left:1582px;width:300px;top:746px;">50</div>
<div class="t c" style="left:1610px;width:300px;top:746px;">60</div>
<div class="t c" style="left:1640px;width:300px;top:746px;">70</div>
<div class="t c" style="left:1667px;width:300px;top:746px;">80</div>
<div class="t c" style="left:1696px;width:300px;top:746px;">90</div>
<div class="t c" style="left:1724px;width:300px;top:746px;">100</div>
<div class="pb" style="left:1585px;top:786px;width:302px;height:19px;line-height:19px;box-shadow:0 -2px 0 #dcd8c4">100.0000</div>
<div class="a" style="left:1584px;top:806px;width:305px;height:134px;background:linear-gradient(90deg,#c4c0ac,#e4e0cc 5px,#ece9d8 8px);box-shadow:0 2px 0 #f8f6ee,2px 0 0 #f4f2e8"></div>
<div class="g" style="left:1587px;top:807px;width:284px;height:132px;background:#ece9d8;"><div class="h" style="left:0;top:19px;width:284px;height:1px;background:#808080"></div><div class="h" style="left:0;top:39px;width:284px;height:1px;background:#808080"></div><div class="h" style="left:0;top:59px;width:284px;height:1px;background:#808080"></div><div class="h" style="left:0;top:79px;width:284px;height:1px;background:#808080"></div><div class="h" style="left:0;top:99px;width:284px;height:1px;background:#808080"></div><div class="h" style="left:0;top:119px;width:284px;height:1px;background:#808080"></div><div class="v" style="left:33px;top:0;width:1px;height:132px;background:#808080"></div><div class="v" style="left:79px;top:0;width:1px;height:132px;background:#808080"></div><div class="v" style="left:129px;top:0;width:1px;height:132px;background:#808080"></div><div class="v" style="left:174px;top:0;width:1px;height:132px;background:#808080"></div><div class="v" style="left:225px;top:0;width:1px;height:132px;background:#808080"></div><div class="v" style="left:276px;top:0;width:1px;height:132px;background:#808080"></div>
<div class="a" style="left:0px;top:0;width:33px;height:19px;border-radius:3px;background:linear-gradient(90deg,#c8c8c8 0,#f6f6f6 6px,#fafafa 50%,#eaeaea calc(100% - 7px),#b0b0b0 100%);box-shadow:inset 0 -1px 1px #aaa"></div>
<div class="a" style="left:33px;top:0;width:46px;height:19px;border-radius:3px;background:linear-gradient(90deg,#c8c8c8 0,#f6f6f6 6px,#fafafa 50%,#eaeaea calc(100% - 7px),#b0b0b0 100%);box-shadow:inset 0 -1px 1px #aaa"></div>
<div class="a" style="left:79px;top:0;width:50px;height:19px;border-radius:3px;background:linear-gradient(90deg,#c8c8c8 0,#f6f6f6 6px,#fafafa 50%,#eaeaea calc(100% - 7px),#b0b0b0 100%);box-shadow:inset 0 -1px 1px #aaa"></div>
<div class="a" style="left:129px;top:0;width:45px;height:19px;border-radius:3px;background:linear-gradient(90deg,#c8c8c8 0,#f6f6f6 6px,#fafafa 50%,#eaeaea calc(100% - 7px),#b0b0b0 100%);box-shadow:inset 0 -1px 1px #aaa"></div>
<div class="a" style="left:174px;top:0;width:51px;height:19px;border-radius:3px;background:linear-gradient(90deg,#c8c8c8 0,#f6f6f6 6px,#fafafa 50%,#eaeaea calc(100% - 7px),#b0b0b0 100%);box-shadow:inset 0 -1px 1px #aaa"></div>
<div class="a" style="left:225px;top:0;width:51px;height:19px;border-radius:3px;background:linear-gradient(90deg,#c8c8c8 0,#f6f6f6 6px,#fafafa 50%,#eaeaea calc(100% - 7px),#b0b0b0 100%);box-shadow:inset 0 -1px 1px #aaa"></div>
</div>
<div class="cell" style="left:1505.0px;top:808px;width:200px;">No..</div>
<div class="cell" style="left:1543.0px;top:808px;width:200px;">力</div>
<div class="cell" style="left:1591.0px;top:808px;width:200px;">变形</div>
<div class="cell" style="left:1638.0px;top:808px;width:200px;">时间</div>
<div class="a" style="left:1871px;top:807px;width:16px;height:132px;background:#ece9d8"></div>
<div class="a" style="left:1871px;top:808px;width:16px;height:16px;background:#ece9d8;border:1px solid #fff;box-shadow:1px 1px 0 #716f64;color:#fbfaf4;font-size:8px;line-height:13px;text-align:center">▴</div>
<div class="a" style="left:1871px;top:923px;width:16px;height:16px;background:#ece9d8;border:1px solid #fff;box-shadow:1px 1px 0 #716f64;color:#fbfaf4;font-size:8px;line-height:13px;text-align:center">▾</div>
<div class="a" style="left:1584px;top:807px;width:12px;height:133px;background:linear-gradient(90deg,rgba(130,125,100,.55),rgba(130,125,100,0))"></div>
<div class="a" style="left:1589px;top:951px;width:132px;height:37px;background:#f0f0f0;border:1px solid #000;box-shadow:inset 1px 1px 0 #fff,inset -2px -2px 0 #808080;text-align:center;line-height:36px">取点</div>
<div class="a" style="left:1757px;top:951px;width:132px;height:37px;background:#f0f0f0;border:1px solid #000;box-shadow:inset 1px 1px 0 #fff,inset -2px -2px 0 #808080;text-align:center;line-height:36px">删除</div>
<div class="a" style="left:0px;top:995px;width:1566px;height:3px;background:linear-gradient(180deg,#f4f4f4,#dcdcdc)"></div>
<div class="a" style="left:1566px;top:996px;width:1353px;height:2px;background:#4e4c40"></div>
<div class="a" style="left:0px;top:998px;width:1919px;height:32px;background:#cbd9ea"></div>
<div class="a" style="left:0px;top:1030px;width:1919px;height:1px;background:#b8c8dc"></div>
<div class="a" style="left:356px;top:1029px;width:1141px;height:2px;background:#0c1c4c"></div>
<div class="sep" style="left:2px;width:6px"></div>
<div class="sep" style="left:150px;width:6px"></div>
<div class="sep" style="left:1118px;width:15px"></div>
<div class="sep" style="left:1277px;width:6px"></div>
<div class="sep" style="left:1398px;width:9px"></div>
<div class="sep" style="left:1551px;width:8px"></div>
<div class="sep" style="left:1674px;width:6px"></div>
<div class="sep" style="left:1795px;width:8px"></div>
<div class="t c" style="left:-76px;width:300px;top:1001px;color:#2b8be8">档案路径:</div>
<div class="t " style="left:158px;top:1001px;"><span style="letter-spacing:.55px">D:\</span>拉力机软件<span style="letter-spacing:.55px">\TM2101N V9.28\TM2101N V9.28\TestData\</span>最大力<span style="letter-spacing:.55px">.mdb</span></div>
<div class="t c" style="left:1051px;width:300px;top:1001px;color:#2b8be8">力传感器:</div>
<div class="t c" style="left:1190px;width:300px;top:1001px;letter-spacing:.45px">10000kgf</div>
<div class="t c" style="left:1326px;width:300px;top:1001px;color:#2b8be8">测试步骤:</div>
<div class="t c" style="left:1465px;width:300px;top:1001px;">1</div>
<div class="t c" style="left:1583px;width:300px;top:1001px;color:#2b8be8">机器状态:</div>
<div class="t c" style="left:1710px;width:300px;top:1001px;">停止</div>
<div class="a" style="left:0px;top:25px;width:2px;height:1006px;background:#8fb0d2"></div>
<div class="a" style="left:1918px;top:25px;width:1px;height:1006px;background:#6a9acc"></div>
<div class="a" style="left:331px;top:153px;width:1259px;height:725px;border-radius:8px;overflow:hidden;background:#fff;box-shadow:0 0 0 1px rgba(90,90,90,.5),0 14px 26px 2px rgba(0,0,0,.42),0 3px 8px rgba(0,0,0,.22)">
<div class="a" style="left:0px;top:0px;width:1259px;height:25px;background:#eef3fa"></div>
<svg class="a" style="left:4px;top:4px" width="16" height="16" viewBox="0 0 16 16"><path d="M0 0H16V16H2V14H1V7H0Z" fill="#000"/><g fill="#f1eda6"><rect x="2.500" y="0.500" width="3" height="2.300"/><rect x="2" y="3" width="5.500" height="3" /><rect x="3" y="6" width="7.500" height="8.300"/><rect x="10.200" y="0" width="0.900" height="11.500"/><rect x="13" y="0" width="1.300" height="11.500"/><rect x="13" y="10.700" width="3" height="1"/><rect x="3" y="13" width="13" height="1.300"/></g><g fill="#1a1800"><rect x="3.500" y="0.300" width="1" height="1"/><rect x="3" y="4" width="3.800" height="1"/><rect x="4" y="6.700" width="2.300" height=".8"/><rect x="7.200" y="6.700" width="2.500" height=".8"/><rect x="4" y="8.600" width="2.300" height=".8"/><rect x="7.200" y="8.600" width="2.500" height=".8"/><rect x="4" y="10.500" width="2.300" height=".8"/><rect x="7.200" y="10.500" width="2.500" height=".8"/><rect x="4" y="12.300" width="2.300" height=".8"/><rect x="7.200" y="12.300" width="2.500" height=".8"/></g></svg>
<div class="t " style="left:26px;top:4px;">测试标准</div>
<svg class="a" style="left:1238px;top:6px" width="12" height="12" viewBox="0 0 12 12" stroke="#111" stroke-width="1.200"><path d="M1 1l10 10M11 1l-10 10"/></svg>
<div class="a" style="left:1px;top:25px;width:211px;height:700px;background:#e1e1e1"></div>
<div class="a" style="left:2px;top:25px;width:210px;height:589px;background:#fff;border:1px solid #76849c;border-top:0"></div>
<div class="a" style="left:194px;top:25px;width:16px;height:588px;background:#f0f0f0"></div>
<div class="a" style="left:201px;top:42px;width:2px;height:329px;background:#7c7c7c"></div>
<div class="a" style="left:3px;top:25px;width:190px;height:18px;background:#f0f0f0;border-right:1px solid #696969;border-bottom:1px solid #696969"></div>
<div class="t c" style="left:-53px;width:300px;top:26px;">名称列表</div>
<div class="a" style="left:5px;top:43px;width:40px;height:18px;background:#0078d7"></div>
<div class="a" style="left:4px;top:43px;width:189px;height:570px;overflow:hidden">
<div class="li" style="left:4px;top:0px;color:#fff;">最大力</div>
<div class="li" style="left:4px;top:18px;"><span style="letter-spacing:.3px">3</span>点抗弯</div>
<div class="li" style="left:4px;top:36px;"><span style="letter-spacing:.3px">4</span>点抗弯</div>
<div class="li" style="left:4px;top:54px;"><span style="letter-spacing:.3px">BS EN ISO 13936-1 2004</span>纺织品</div>
<div class="li" style="left:4px;top:72px;"><span style="letter-spacing:.3px">EnglishReport</span></div>
<div class="li" style="left:4px;top:90px;"><span style="letter-spacing:.3px">GBT 10807-06</span> 软质泡沫聚合材料硬</div>
<div class="li" style="left:4px;top:108px;"><span style="letter-spacing:.3px">GBT 10807-06</span> 软质泡沫聚合材料硬</div>
<div class="li" style="left:4px;top:126px;"><span style="letter-spacing:.3px">GBT 10807-06</span> 软质泡沫聚合材料硬</div>
<div class="li" style="left:4px;top:144px;"><span style="letter-spacing:.3px">GBT 108080-2006</span> 高聚物多孔弹性</div>
<div class="li" style="left:4px;top:162px;"><span style="letter-spacing:.3px">GBT 16578.1-2008</span> 塑料薄膜和薄片</div>
<div class="li" style="left:4px;top:180px;"><span style="letter-spacing:.3px">GBT 17657</span> 人造板及饰面人造板理化</div>
<div class="li" style="left:4px;top:198px;"><span style="letter-spacing:.3px">GBT 17657</span> 人造板及饰面人造板理化</div>
<div class="li" style="left:4px;top:216px;"><span style="letter-spacing:.3px">GBT 17657</span> 人造板及饰面人造板理化</div>
<div class="li" style="left:4px;top:234px;"><span style="letter-spacing:.3px">GB/T 2792-2014</span> 胶粘带剥离强度的</div>
<div class="li" style="left:4px;top:252px;"><span style="letter-spacing:.3px">GBT 3923.1-1997</span> 纺织品 织物拉伸</div>
<div class="li" style="left:4px;top:270px;"><span style="letter-spacing:.3px">GBT 6344-1996</span> 软质泡沫聚合物材</div>
<div class="li" style="left:4px;top:288px;"><span style="letter-spacing:.3px">GBT 7314-2005</span> 金属材料室温压缩</div>
<div class="li" style="left:4px;top:306px;"><span style="letter-spacing:.3px">GBT1040.1-2006</span>塑料拉伸性能的测</div>
<div class="li" style="left:4px;top:324px;"><span style="letter-spacing:.3px">GBT228.1-2010</span>金属材料拉伸试验</div>
<div class="li" style="left:4px;top:342px;"><span style="letter-spacing:.3px">GBT228.1-2010</span>金属材料拉伸试验</div>
<div class="li" style="left:4px;top:360px;"><span style="letter-spacing:.3px">GBT228.1-2010</span>金属材料拉伸试验</div>
<div class="li" style="left:4px;top:378px;"><span style="letter-spacing:.3px">GBT4857.3-2008</span>静载荷堆码试验方</div>
<div class="li" style="left:4px;top:396px;"><span style="letter-spacing:.3px">GBT9647-2003</span>环刚度的测定</div>
<div class="li" style="left:4px;top:414px;"><span style="letter-spacing:.3px">ISO2439</span>压陷法<span style="letter-spacing:.3px">A</span></div>
<div class="li" style="left:4px;top:432px;"><span style="letter-spacing:.3px">ISO2439</span>压陷法<span style="letter-spacing:.3px">B</span></div>
<div class="li" style="left:4px;top:450px;"><span style="letter-spacing:.3px">ISO2439</span>压陷法<span style="letter-spacing:.3px">C</span></div>
<div class="li" style="left:4px;top:468px;">拉伸</div>
<div class="li" style="left:4px;top:486px;">剥离</div>
<div class="li" style="left:4px;top:504px;">剥离<span style="letter-spacing:.3px">2</span></div>
<div class="li" style="left:4px;top:522px;">玻璃<span style="letter-spacing:.3px">4</span>点抗弯</div>
<div class="li" style="left:4px;top:540px;">持压</div>
<div class="li" style="left:4px;top:558px;">剪切</div>
</div>
<div class="btn" style="left:30px;top:631px;width:146px;height:20px;line-height:18px;padding-top:0px">增加</div>
<div class="btn" style="left:30px;top:663px;width:146px;height:22px;line-height:20px;padding-top:0px">移除</div>
<div class="btn" style="left:30px;top:698px;width:146px;height:23px;line-height:21px;padding-top:1px">删除</div>
<div class="a" style="left:212px;top:25px;width:1046px;height:24px;background:#e1e1e1"></div>
<div class="a" style="left:212px;top:25px;width:72px;height:29px;background:#fff;border-right:2px solid;border-image:linear-gradient(90deg,#f4f4f4,#b4b4b4) 1"></div>
<div class="a" style="left:284px;top:28px;width:66px;height:22px;background:#fcfcfc;border-right:2px solid #b4b4b4;border-radius:3px 3px 0 0"></div>
<div class="a" style="left:351px;top:28px;width:66px;height:22px;background:#fcfcfc;border-right:2px solid #b4b4b4;border-radius:3px 3px 0 0"></div>
<div class="t c" style="left:96px;width:300px;top:28px;">试样资料</div>
<div class="t c" style="left:166px;width:300px;top:30px;">测试方案</div>
<div class="t c" style="left:234px;width:300px;top:30px;">结果设置</div>
<div class="t c" style="left:341px;width:300px;top:30px;">名称</div>
<div class="a" style="left:526px;top:26px;width:562px;height:23px;background:#fff;border:1px solid #a8a8a8"></div>
<div class="t " style="left:530px;top:30px;">最大力</div>
<div class="a" style="left:1090px;top:26px;width:164px;height:23px;background:#fff;border:1px solid #a8a8a8"></div>
<div class="t " style="left:1094px;top:30px;">简体中文</div>
<div class="a" style="left:1235px;top:28px;width:17px;height:19px;background:#fff;border:1px solid #c8c8c8;border-radius:2px"></div>
<svg class="a" style="left:1238px;top:34px" width="11" height="7" viewBox="0 0 11 7" fill="none" stroke="#555" stroke-width="1"><path d="M1 1l4.500 4.500l4.500-4.500"/></svg>
<div class="a" style="left:252px;top:65px;width:165px;height:23px;background:#fff;border:1px solid #8c8c8c"></div>
<div class="t " style="left:256px;top:69px;">玻璃</div>
<div class="a" style="left:397px;top:67px;width:17px;height:19px;background:#fff;border:1px solid #c8c8c8;border-radius:2px"></div>
<svg class="a" style="left:400px;top:73px" width="11" height="7" viewBox="0 0 11 7" fill="none" stroke="#555" stroke-width="1"><path d="M1 1l4.500 4.500l4.500-4.500"/></svg>
<div class="btn" style="left:569px;top:65px;width:93px;height:22px;line-height:20px;padding-top:.5px">新增试样</div>
<div class="btn" style="left:809px;top:65px;width:106px;height:22px;line-height:20px;padding-top:.5px">删除试样</div>
<div class="a" style="left:251px;top:91px;width:1003px;height:338px;background:#e6e6e6"></div>
<div class="g" style="left:254px;top:92px;width:982px;height:319px;background:#fff">
<div class="a" style="left:0;top:108px;width:982px;height:19px;background:#3d6df6"></div>
<div class="h" style="left:0;top:45px;width:982px;height:1px"></div>
<div class="h" style="left:0;top:47px;width:982px;height:1px"></div>
<div class="h" style="left:0;top:67px;width:982px;height:1px"></div>
<div class="h" style="left:0;top:87px;width:982px;height:1px"></div>
<div class="h" style="left:0;top:107px;width:982px;height:1px"></div>
<div class="h" style="left:0;top:127px;width:982px;height:1px"></div>
<div class="h" style="left:0;top:147px;width:982px;height:1px"></div>
<div class="h" style="left:0;top:167px;width:982px;height:1px"></div>
<div class="h" style="left:0;top:187px;width:982px;height:1px"></div>
<div class="h" style="left:0;top:207px;width:982px;height:1px"></div>
<div class="h" style="left:0;top:227px;width:982px;height:1px"></div>
<div class="h" style="left:0;top:247px;width:982px;height:1px"></div>
<div class="h" style="left:0;top:267px;width:982px;height:1px"></div>
<div class="h" style="left:0;top:287px;width:982px;height:1px"></div>
<div class="h" style="left:0;top:307px;width:982px;height:1px"></div>
<div class="v" style="left:50px;top:0;width:1px;height:319px"></div>
<div class="v" style="left:122px;top:0;width:1px;height:319px"></div>
<div class="v" style="left:181px;top:0;width:1px;height:319px"></div>
<div class="v" style="left:238px;top:0;width:1px;height:319px"></div>
<div class="v" style="left:294px;top:0;width:1px;height:319px"></div>
<div class="v" style="left:354px;top:0;width:1px;height:319px"></div>
<div class="v" style="left:423px;top:0;width:1px;height:319px"></div>
<div class="v" style="left:477px;top:0;width:1px;height:319px"></div>
<div class="v" style="left:528px;top:0;width:1px;height:319px"></div>
<div class="v" style="left:583px;top:0;width:1px;height:319px"></div>
<div class="v" style="left:636px;top:0;width:1px;height:319px"></div>
<div class="v" style="left:701px;top:0;width:1px;height:319px"></div>
<div class="v" style="left:760px;top:0;width:1px;height:319px"></div>
<div class="v" style="left:823px;top:0;width:1px;height:319px"></div>
<div class="v" style="left:879px;top:0;width:1px;height:319px"></div>
<div class="v" style="left:951px;top:0;width:1px;height:319px"></div>
<div class="a" style="left:637px;top:188px;width:3px;height:1px;background:#1010e0"></div><div class="a" style="left:637px;top:188px;width:1px;height:3px;background:#1010e0"></div>
<div class="cell" style="left:-25.5px;top:1.5px;width:100px">编号</div>
<div class="cell" style="left:35.5px;top:1.5px;width:100px">形状</div>
<div class="cell" style="left:101.0px;top:1.5px;width:100px">宽度</div>
<div class="cell" style="left:101.0px;top:19px;width:100px">(mm)</div>
<div class="cell" style="left:159.0px;top:1.5px;width:100px">厚度</div>
<div class="cell" style="left:159.0px;top:19px;width:100px">(mm)</div>
<div class="cell" style="left:215.5px;top:1.5px;width:100px">外径</div>
<div class="cell" style="left:215.5px;top:19px;width:100px">(mm)</div>
<div class="cell" style="left:273.5px;top:1.5px;width:100px">内径</div>
<div class="cell" style="left:273.5px;top:19px;width:100px">(mm)</div>
<div class="cell" style="left:338.0px;top:1.5px;width:100px">面积</div>
<div class="cell" style="left:338.0px;top:19px;width:100px">(mm^2)</div>
<div class="cell" style="left:399.5px;top:1.5px;width:100px">标距</div>
<div class="cell" style="left:399.5px;top:19px;width:100px">(mm)</div>
<div class="cell" style="left:452.0px;top:1.5px;width:100px">上跨距</div>
<div class="cell" style="left:452.0px;top:19px;width:100px">(mm)</div>
<div class="cell" style="left:505.0px;top:1.5px;width:100px">下跨距</div>
<div class="cell" style="left:505.0px;top:19px;width:100px">(mm)</div>
<div class="cell" style="left:559.0px;top:1.5px;width:100px">长度</div>
<div class="cell" style="left:559.0px;top:19px;width:100px">(mm)</div>
<div class="cell" style="left:618.0px;top:1.5px;width:100px">圆角半径</div>
<div class="cell" style="left:618.0px;top:19px;width:100px">(mm)</div>
<div class="cell" style="left:680.0px;top:1.5px;width:100px">断后标距</div>
<div class="cell" style="left:680.0px;top:19px;width:100px">(mm)</div>
<div class="cell" style="left:741.0px;top:1.5px;width:100px">断后外径</div>
<div class="cell" style="left:741.0px;top:19px;width:100px">(mm)</div>
<div class="cell" style="left:800.5px;top:1.5px;width:100px">比例系数</div>
<div class="cell" style="left:864.5px;top:1.5px;width:100px">原始标距</div>
<div class="cell" style="left:864.5px;top:19px;width:100px">(mm)</div>
<div class="cell" style="left:934.5px;top:1.5px;width:100px">螺栓直径</div>
<div class="cell" style="left:934.5px;top:19px;width:100px">(mm)</div>
<div class="cell" style="left:-25.5px;top:48.69999999999999px;width:100px">1</div>
<div class="cell" style="left:35.5px;top:48.69999999999999px;width:100px">圆形</div>
<div class="cell" style="left:101.0px;top:48.69999999999999px;width:100px">-</div>
<div class="cell" style="left:159.0px;top:48.69999999999999px;width:100px">-</div>
<div class="cell" style="left:215.5px;top:48.69999999999999px;width:100px">1.100</div>
<div class="cell" style="left:273.5px;top:48.69999999999999px;width:100px">-</div>
<div class="cell" style="left:338.0px;top:48.69999999999999px;width:100px">0.950</div>
<div class="cell" style="left:399.5px;top:48.69999999999999px;width:100px">109.310</div>
<div class="cell" style="left:452.0px;top:48.69999999999999px;width:100px">-</div>
<div class="cell" style="left:505.0px;top:48.69999999999999px;width:100px">-</div>
<div class="cell" style="left:559.0px;top:48.69999999999999px;width:100px">-</div>
<div class="cell" style="left:618.0px;top:48.69999999999999px;width:100px">-</div>
<div class="cell" style="left:680.0px;top:48.69999999999999px;width:100px">86.000</div>
<div class="cell" style="left:741.0px;top:48.69999999999999px;width:100px">0.000000</div>
<div class="cell" style="left:800.5px;top:48.69999999999999px;width:100px">0.000000</div>
<div class="cell" style="left:864.5px;top:48.69999999999999px;width:100px">60.000</div>
<div class="cell" style="left:934.5px;top:48.69999999999999px;width:100px">0.000</div>
<div class="cell" style="left:-25.5px;top:68.69999999999999px;width:100px">2</div>
<div class="cell" style="left:35.5px;top:68.69999999999999px;width:100px">圆形</div>
<div class="cell" style="left:101.0px;top:68.69999999999999px;width:100px">-</div>
<div class="cell" style="left:159.0px;top:68.69999999999999px;width:100px">-</div>
<div class="cell" style="left:215.5px;top:68.69999999999999px;width:100px">1.200</div>
<div class="cell" style="left:273.5px;top:68.69999999999999px;width:100px">-</div>
<div class="cell" style="left:338.0px;top:68.69999999999999px;width:100px">1.131</div>
<div class="cell" style="left:399.5px;top:68.69999999999999px;width:100px">102.700</div>
<div class="cell" style="left:452.0px;top:68.69999999999999px;width:100px">-</div>
<div class="cell" style="left:505.0px;top:68.69999999999999px;width:100px">-</div>
<div class="cell" style="left:559.0px;top:68.69999999999999px;width:100px">-</div>
<div class="cell" style="left:618.0px;top:68.69999999999999px;width:100px">-</div>
<div class="cell" style="left:680.0px;top:68.69999999999999px;width:100px">90.860</div>
<div class="cell" style="left:741.0px;top:68.69999999999999px;width:100px">0.000000</div>
<div class="cell" style="left:800.5px;top:68.69999999999999px;width:100px">0.000000</div>
<div class="cell" style="left:864.5px;top:68.69999999999999px;width:100px">60.000</div>
<div class="cell" style="left:934.5px;top:68.69999999999999px;width:100px">0.000</div>
<div class="cell" style="left:-25.5px;top:88.69999999999999px;width:100px">3</div>
<div class="cell" style="left:35.5px;top:88.69999999999999px;width:100px">圆形</div>
<div class="cell" style="left:101.0px;top:88.69999999999999px;width:100px">-</div>
<div class="cell" style="left:159.0px;top:88.69999999999999px;width:100px">-</div>
<div class="cell" style="left:215.5px;top:88.69999999999999px;width:100px">1.200</div>
<div class="cell" style="left:273.5px;top:88.69999999999999px;width:100px">-</div>
<div class="cell" style="left:338.0px;top:88.69999999999999px;width:100px">1.131</div>
<div class="cell" style="left:399.5px;top:88.69999999999999px;width:100px">108.620</div>
<div class="cell" style="left:452.0px;top:88.69999999999999px;width:100px">-</div>
<div class="cell" style="left:505.0px;top:88.69999999999999px;width:100px">-</div>
<div class="cell" style="left:559.0px;top:88.69999999999999px;width:100px">-</div>
<div class="cell" style="left:618.0px;top:88.69999999999999px;width:100px">-</div>
<div class="cell" style="left:680.0px;top:88.69999999999999px;width:100px">86.670</div>
<div class="cell" style="left:741.0px;top:88.69999999999999px;width:100px">0.000000</div>
<div class="cell" style="left:800.5px;top:88.69999999999999px;width:100px">0.000000</div>
<div class="cell" style="left:864.5px;top:88.69999999999999px;width:100px">60.000</div>
<div class="cell" style="left:934.5px;top:88.69999999999999px;width:100px">0.000</div>
<div class="cell" style="left:-25.5px;top:108.69999999999999px;width:100px">4</div>
<div class="cell" style="left:35.5px;top:108.69999999999999px;width:100px">矩形</div>
<div class="cell" style="left:101.0px;top:108.69999999999999px;width:100px">25.000</div>
<div class="cell" style="left:159.0px;top:108.69999999999999px;width:100px">1.850</div>
<div class="cell" style="left:215.5px;top:108.69999999999999px;width:100px">-</div>
<div class="cell" style="left:273.5px;top:108.69999999999999px;width:100px">-</div>
<div class="cell" style="left:338.0px;top:108.69999999999999px;width:100px">46.250</div>
<div class="cell" style="left:399.5px;top:108.69999999999999px;width:100px">32.910</div>
<div class="cell" style="left:452.0px;top:108.69999999999999px;width:100px">-</div>
<div class="cell" style="left:505.0px;top:108.69999999999999px;width:100px">-</div>
<div class="cell" style="left:559.0px;top:108.69999999999999px;width:100px">-</div>
<div class="cell" style="left:618.0px;top:108.69999999999999px;width:100px">0.000</div>
<div class="cell" style="left:680.0px;top:108.69999999999999px;width:100px">63.080</div>
<div class="cell" style="left:741.0px;top:108.69999999999999px;width:100px">-</div>
<div class="cell" style="left:800.5px;top:108.69999999999999px;width:100px">0.000000</div>
<div class="cell" style="left:864.5px;top:108.69999999999999px;width:100px">50.000</div>
<div class="cell" style="left:934.5px;top:108.69999999999999px;width:100px">0.000</div>
<div class="cell" style="left:-25.5px;top:128.7px;width:100px">5</div>
<div class="cell" style="left:35.5px;top:128.7px;width:100px">矩形</div>
<div class="cell" style="left:101.0px;top:128.7px;width:100px">25.000</div>
<div class="cell" style="left:159.0px;top:128.7px;width:100px">1.850</div>
<div class="cell" style="left:215.5px;top:128.7px;width:100px">-</div>
<div class="cell" style="left:273.5px;top:128.7px;width:100px">-</div>
<div class="cell" style="left:338.0px;top:128.7px;width:100px">46.250</div>
<div class="cell" style="left:399.5px;top:128.7px;width:100px">33.670</div>
<div class="cell" style="left:452.0px;top:128.7px;width:100px">-</div>
<div class="cell" style="left:505.0px;top:128.7px;width:100px">-</div>
<div class="cell" style="left:559.0px;top:128.7px;width:100px">-</div>
<div class="cell" style="left:618.0px;top:128.7px;width:100px">0.000</div>
<div class="cell" style="left:680.0px;top:128.7px;width:100px">63.080</div>
<div class="cell" style="left:741.0px;top:128.7px;width:100px">-</div>
<div class="cell" style="left:800.5px;top:128.7px;width:100px">0.000000</div>
<div class="cell" style="left:864.5px;top:128.7px;width:100px">50.000</div>
<div class="cell" style="left:934.5px;top:128.7px;width:100px">0.000</div>
</div>
<div class="a" style="left:1236px;top:92px;width:17px;height:319px;background:#d9d9d9"></div>
<div class="a" style="left:1236px;top:92px;width:16px;height:16px;background:#dfdfdf;border-top:1px solid #fff;border-left:1px solid #fff;box-shadow:1px 1px 0 #8c8c8c;color:#b8b8b8;font-size:8px;line-height:15px;text-align:center">▴</div>
<div class="a" style="left:1236px;top:394px;width:16px;height:16px;background:#dfdfdf;border-top:1px solid #fff;border-left:1px solid #fff;box-shadow:1px 1px 0 #8c8c8c;color:#b8b8b8;font-size:8px;line-height:15px;text-align:center">▾</div>
<div class="a" style="left:254px;top:411px;width:982px;height:17px;background:linear-gradient(180deg,#ffffff 0%,#ececec 30%,#c8c8c8 70%,#9c9c9c 100%)"></div>
<div class="a" style="left:271px;top:411px;width:114px;height:17px;background:#d7d7d7;border-top:1px solid #8c8c8c"></div>
<div class="a" style="left:1028px;top:411px;width:191px;height:17px;background:#d7d7d7;border-top:1px solid #8c8c8c;border-left:1px solid #6c6c6c"></div>
<div class="a" style="left:254px;top:411px;width:16px;height:16px;background:#dfdfdf;border-top:1px solid #fff;border-left:1px solid #fff;box-shadow:1px 1px 0 #8c8c8c;color:#b8b8b8;font-size:8px;line-height:15px;text-align:center">◂</div>
<div class="a" style="left:1219px;top:411px;width:16px;height:16px;background:#dfdfdf;border-top:1px solid #fff;border-left:1px solid #fff;box-shadow:1px 1px 0 #8c8c8c;color:#b8b8b8;font-size:8px;line-height:15px;text-align:center">▸</div>
<div class="a" style="left:1236px;top:411px;width:17px;height:17px;background:#b8b8b8"></div>
<div class="btn" style="left:329px;top:438px;width:85px;height:23px;line-height:21px;">增加数目</div>
<div class="btn" style="left:520px;top:437px;width:105px;height:23px;line-height:21px;">减少数目</div>
<div class="btn" style="left:759px;top:435px;width:102px;height:22px;line-height:20px;color:#a0a0a0;border-color:#e2e2e2">参数复制</div>
<div class="a" style="left:286px;top:520px;width:215px;height:152px;background:#fff;border:2px solid #727272;border-right-color:#8a8a8a;border-bottom-color:#8a8a8a"></div>
<div class="a" style="left:288px;top:522px;width:211px;height:7px;background:#f0f0f0"></div>
<div class="a" style="left:288px;top:661px;width:211px;height:9px;background:#f0f0f0"></div>
<svg class="a" style="left:286px;top:520px" width="215" height="152" viewBox="0 0 215 152" fill="none" stroke="#ff00ff" stroke-width="1">
<rect x="46" y="41.500" width="120" height="90" rx="14" fill="#ffff00"/>
<path d="M46 21v17M166 21v17M46 28.500h50M116 28.500h50"/><path d="M46 28.500l15-2.500v5zM166 28.500l-15-2.500v5z" fill="#ff00ff"/>
<path d="M22.500 41.500h21.500M22.500 131.500h21.500M30.500 41.500v38M30.500 94v37.500M22.500 80v14M22.500 87h15"/><path d="M30.500 41.500l-2.500 15h5zM30.500 131.500l-2.500-15h5z" fill="#ff00ff"/>
<path d="M151 56l44-31.500"/><path d="M162.500 47.800l14.500-6.500l-3.500-4.800z" fill="#ff00ff"/>
<text x="106.500" y="36" font-family="DejaVu Sans Light,DejaVu Sans,Liberation Sans,sans-serif" font-weight="200" font-size="18" text-anchor="middle" fill="#ff00ff" stroke="none">W</text>
<text x="0" y="0" transform="translate(180 30.500) rotate(-32)" font-family="DejaVu Sans Light,DejaVu Sans,Liberation Sans,sans-serif" font-weight="200" font-size="17" fill="#ff00ff" stroke="none">R</text>
</svg>
<div class="t " style="left:640px;top:485.4px;">测试人员</div>
<div class="inp" style="left:695px;top:479px;width:113px"></div>
<div class="dd" style="left:815px;top:482px"></div>
<div class="rx" style="left:833px;top:477px"><b></b><svg class="a" style="left:5px;top:6px" width="11" height="11" viewBox="0 0 11 11" stroke="#f4f4f4" stroke-width="2.300"><path d="M1.500 1.500l8 8M9.500 1.500l-8 8"/></svg></div>
<div class="t " style="left:940px;top:487.5px;">试验材质</div>
<div class="inp" style="left:995px;top:479px;width:113px"></div>
<div class="dd" style="left:1115px;top:482px"></div>
<div class="rx" style="left:1133px;top:477px"><b></b><svg class="a" style="left:5px;top:6px" width="11" height="11" viewBox="0 0 11 11" stroke="#f4f4f4" stroke-width="2.300"><path d="M1.500 1.500l8 8M9.500 1.500l-8 8"/></svg></div>
<div class="t " style="left:640px;top:529.4px;">产品名称</div>
<div class="inp" style="left:695px;top:525px;width:113px"></div>
<div class="dd" style="left:815px;top:528px"></div>
<div class="rx" style="left:833px;top:521px"><b></b><svg class="a" style="left:5px;top:6px" width="11" height="11" viewBox="0 0 11 11" stroke="#f4f4f4" stroke-width="2.300"><path d="M1.500 1.500l8 8M9.500 1.500l-8 8"/></svg></div>
<div class="t " style="left:940px;top:531.5px;">测试批号</div>
<div class="inp" style="left:995px;top:525px;width:113px"></div>
<div class="dd" style="left:1115px;top:528px"></div>
<div class="rx" style="left:1133px;top:523px"><b></b><svg class="a" style="left:5px;top:6px" width="11" height="11" viewBox="0 0 11 11" stroke="#f4f4f4" stroke-width="2.300"><path d="M1.500 1.500l8 8M9.500 1.500l-8 8"/></svg></div>
<div class="t " style="left:640px;top:573px;">产品批号</div>
<div class="inp" style="left:695px;top:568px;width:113px"></div>
<div class="dd" style="left:815px;top:571px"></div>
<div class="rx" style="left:833px;top:565px"><b></b><svg class="a" style="left:5px;top:6px" width="11" height="11" viewBox="0 0 11 11" stroke="#f4f4f4" stroke-width="2.300"><path d="M1.500 1.500l8 8M9.500 1.500l-8 8"/></svg></div>
<div class="t " style="left:940px;top:578px;">生产日期</div>
<div class="inp" style="left:995px;top:568px;width:113px"></div>
<div class="dd" style="left:1115px;top:571px"></div>
<div class="rx" style="left:1133px;top:566px"><b></b><svg class="a" style="left:5px;top:6px" width="11" height="11" viewBox="0 0 11 11" stroke="#f4f4f4" stroke-width="2.300"><path d="M1.500 1.500l8 8M9.500 1.500l-8 8"/></svg></div>
<div class="t " style="left:644px;top:617px;">产品序号</div>
<div class="inp" style="left:695px;top:612px;width:113px"></div>
<div class="dd" style="left:815px;top:615px"></div>
<div class="rx" style="left:833px;top:609px"><b></b><svg class="a" style="left:5px;top:6px" width="11" height="11" viewBox="0 0 11 11" stroke="#f4f4f4" stroke-width="2.300"><path d="M1.500 1.500l8 8M9.500 1.500l-8 8"/></svg></div>
<div class="t " style="left:940px;top:621px;">环境温度</div>
<div class="inp" style="left:995px;top:612px;width:113px"></div>
<div class="dd" style="left:1115px;top:615px"></div>
<div class="rx" style="left:1133px;top:609px"><b></b><svg class="a" style="left:5px;top:6px" width="11" height="11" viewBox="0 0 11 11" stroke="#f4f4f4" stroke-width="2.300"><path d="M1.500 1.500l8 8M9.500 1.500l-8 8"/></svg></div>
<div class="t " style="left:644px;top:660px;">客户名称</div>
<div class="inp" style="left:695px;top:655px;width:113px"></div>
<div class="dd" style="left:815px;top:658px"></div>
<div class="rx" style="left:833px;top:653px"><b></b><svg class="a" style="left:5px;top:6px" width="11" height="11" viewBox="0 0 11 11" stroke="#f4f4f4" stroke-width="2.300"><path d="M1.500 1.500l8 8M9.500 1.500l-8 8"/></svg></div>
<div class="t " style="left:940px;top:660px;">环境湿度</div>
<div class="inp" style="left:995px;top:655px;width:113px"></div>
<div class="dd" style="left:1115px;top:658px"></div>
<div class="rx" style="left:1133px;top:652px"><b></b><svg class="a" style="left:5px;top:6px" width="11" height="11" viewBox="0 0 11 11" stroke="#f4f4f4" stroke-width="2.300"><path d="M1.500 1.500l8 8M9.500 1.500l-8 8"/></svg></div>
<div class="t " style="left:701px;top:617px;">2-2</div>
<div class="btn" style="left:443px;top:702px;width:146px;height:20px;line-height:18px">确定</div>
<div class="btn" style="left:947px;top:700px;width:146px;height:20px;line-height:18px">取消</div>
</div>
</body></html>
